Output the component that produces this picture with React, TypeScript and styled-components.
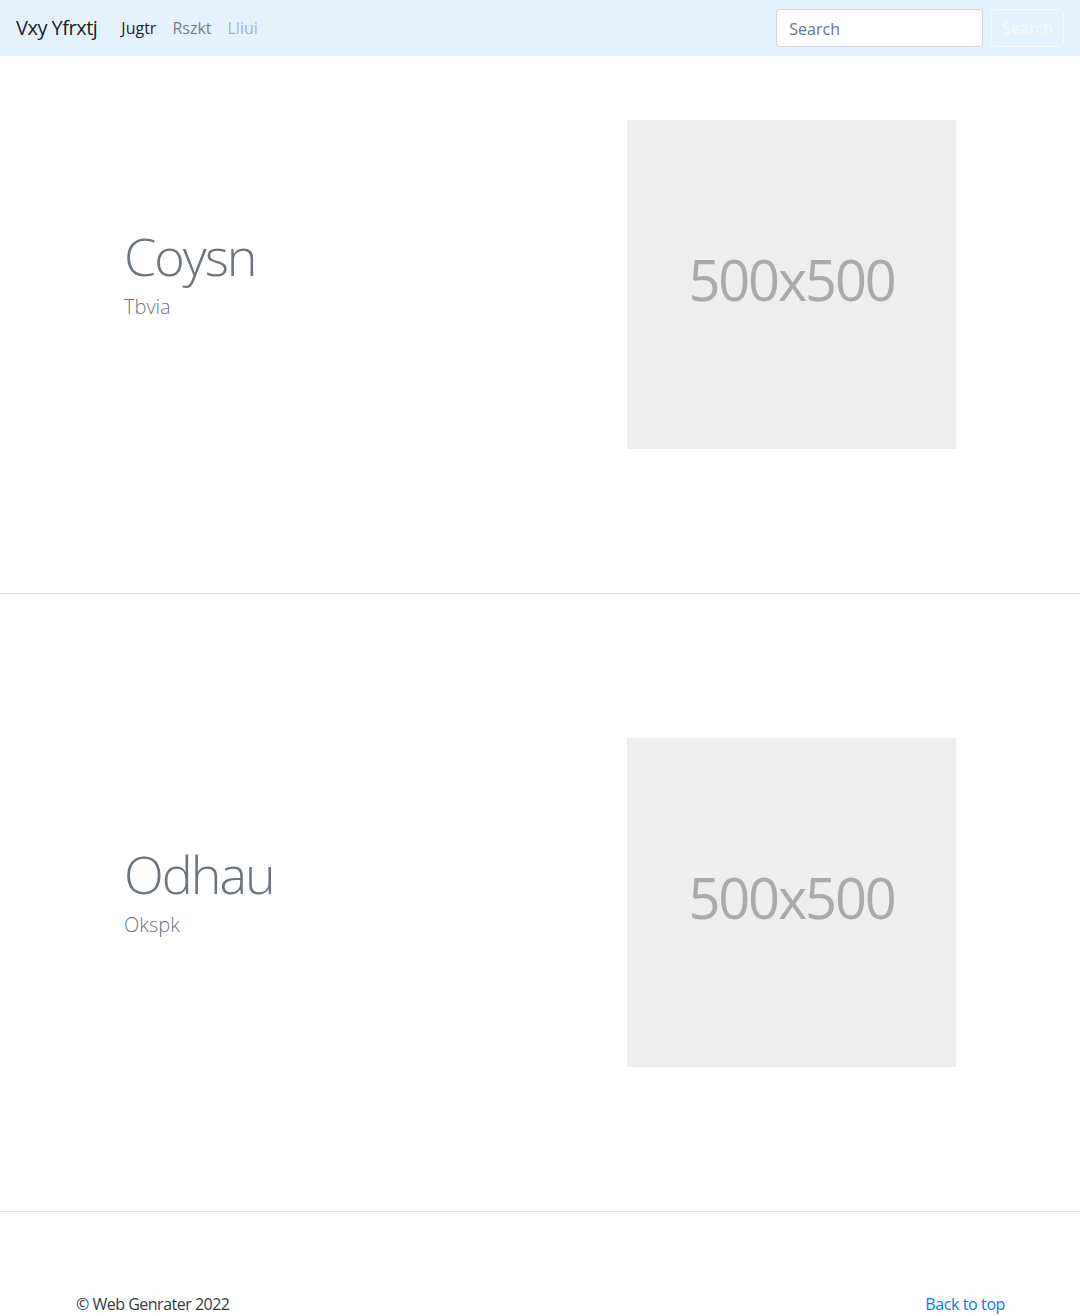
import React from "react";
import styled, { createGlobalStyle } from "styled-components";

const GlobalStyle = createGlobalStyle`
  html, body { margin: 0; padding: 0; background: #fff; }
  body {
    font-family: "Segoe UI", "Open Sans", "Noto Sans", sans-serif;
    font-size: 16px;
    line-height: 1.5;
    color: #212529;
  }
  * { box-sizing: border-box; }
`;

const Navbar = styled.nav`
  height: 56px;
  background: #e3f2fd;
  display: flex;
  align-items: center;
  padding: 8px 16px;
`;

const Brand = styled.a`
  font-size: 20px;
  line-height: 30px;
  letter-spacing: -0.5px;
  color: rgba(0, 0, 0, 0.9);
  text-decoration: none;
  margin-right: 16px;
`;

const NavList = styled.ul`
  display: flex;
  list-style: none;
  margin: 0;
  padding: 0;
  flex: 1;
`;

const NavLink = styled.a<{ $state: "active" | "normal" | "disabled" }>`
  display: block;
  padding: 8px;
  font-size: 16px;
  line-height: 24px;
  text-decoration: none;
  color: ${(p) =>
    p.$state === "active"
      ? "rgba(0,0,0,0.9)"
      : p.$state === "disabled"
      ? "rgba(0,0,0,0.3)"
      : "rgba(0,0,0,0.5)"};
`;

const SearchForm = styled.form`
  display: flex;
  align-items: center;
  gap: 8px;
`;

const SearchInput = styled.input`
  width: 207px;
  height: 38px;
  padding: 7px 12px 5px;
  font-family: inherit;
  font-size: 16px;
  color: #495057;
  background: #fff;
  border: 1px solid #ced4da;
  border-radius: 4px;
  outline: none;
  &::placeholder { color: #6c757d; }
`;

const OutlineButton = styled.button`
  height: 38px;
  padding: 6px 10px;
  font-family: inherit;
  font-size: 16px;
  color: #f8f9fa;
  background: transparent;
  border: 1px solid #f8f9fa;
  border-radius: 4px;
`;

const Featurette = styled.section<{ $first?: boolean }>`
  max-width: 960px;
  margin: 0 auto;
  padding: ${(p) => (p.$first ? "64px" : "144px")} 64px 144px;
  display: grid;
  grid-template-columns: 1fr 329px;
  align-items: center;
`;

const TextBlock = styled.div`
  display: flex;
  flex-direction: column;
  gap: 4px;
  padding-bottom: 22px;
`;

const Heading = styled.h2`
  margin: 0;
  font-size: 52px;
  font-weight: 300;
  line-height: 1.2;
  color: #6c757d;
  letter-spacing: -2px;
`;

const Lead = styled.p`
  margin: 0;
  font-size: 20px;
  font-weight: 300;
  line-height: 1.5;
  color: #6c757d;
`;

const Placeholder = styled.div`
  width: 329px;
  height: 329px;
  background: #eeeeee;
  color: #aaaaaa;
  display: flex;
  align-items: center;
  justify-content: center;
  font-size: 56px;
  line-height: 1;
  letter-spacing: -2.2px;
  padding-bottom: 12px;
`;

const Divider = styled.hr`
  margin: 0;
  border: 0;
  border-top: 1px solid rgba(0, 0, 0, 0.1);
`;

const Footer = styled.footer`
  max-width: 960px;
  margin: 0 auto;
  padding: 80px 15px 0 16px;
  display: flex;
  justify-content: space-between;
  font-size: 16px;
  line-height: 24px;
`;

const Copy = styled.p`
  margin: 0;
  color: #343a40;
  letter-spacing: -0.5px;
`;

const TopLink = styled.a`
  color: #007bff;
  text-decoration: none;
  letter-spacing: -0.4px;
`;

const items = [
  { title: "Coysn", lead: "Tbvia" },
  { title: "Odhau", lead: "Okspk" },
];

export default function App() {
  return (
    <>
      <GlobalStyle />
      <Navbar>
        <Brand href="#">Vxy Yfrxtj</Brand>
        <NavList>
          <li><NavLink $state="active" href="#">Jugtr</NavLink></li>
          <li><NavLink $state="normal" href="#">Rszkt</NavLink></li>
          <li><NavLink $state="disabled" href="#">Lliui</NavLink></li>
        </NavList>
        <SearchForm onSubmit={(e) => e.preventDefault()}>
          <SearchInput type="search" placeholder="Search" aria-label="Search" />
          <OutlineButton type="submit">Search</OutlineButton>
        </SearchForm>
      </Navbar>
      {items.map((it, i) => (
        <React.Fragment key={it.title}>
          <Featurette $first={i === 0}>
            <TextBlock>
              <Heading>{it.title}</Heading>
              <Lead>{it.lead}</Lead>
            </TextBlock>
            <Placeholder>500x500</Placeholder>
          </Featurette>
          <Divider />
        </React.Fragment>
      ))}
      <Footer>
        <Copy>© Web Genrater 2022</Copy>
        <TopLink href="#">Back to top</TopLink>
      </Footer>
    </>
  );
}
